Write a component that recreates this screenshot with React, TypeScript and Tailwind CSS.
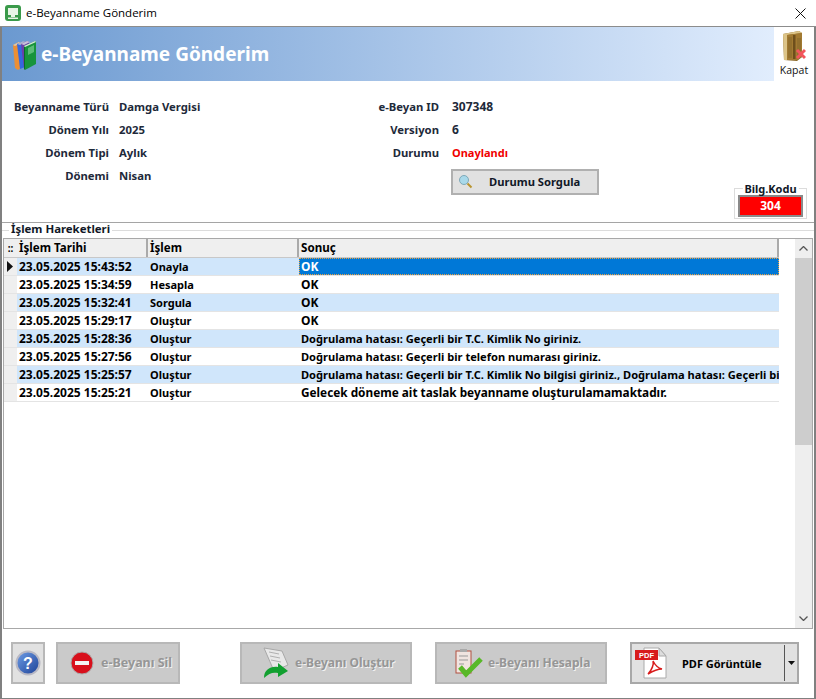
import React from "react";

const rows = [
  ["23.05.2025 15:43:52", "Onayla", "OK", "text-[12px]"],
  ["23.05.2025 15:34:59", "Hesapla", "OK", "text-[12px]"],
  ["23.05.2025 15:32:41", "Sorgula", "OK", "text-[12px]"],
  ["23.05.2025 15:29:17", "Oluştur", "OK", "text-[12px]"],
  ["23.05.2025 15:28:36", "Oluştur", "Doğrulama hatası: Geçerli bir T.C. Kimlik No giriniz.", "text-[11.1px]"],
  ["23.05.2025 15:27:56", "Oluştur", "Doğrulama hatası: Geçerli bir telefon numarası giriniz.", "text-[11.1px]"],
  ["23.05.2025 15:25:57", "Oluştur", "Doğrulama hatası: Geçerli bir T.C. Kimlik No bilgisi giriniz., Doğrulama hatası: Geçerli bir", "text-[11.1px]"],
  ["23.05.2025 15:25:21", "Oluştur", "Gelecek döneme ait taslak beyanname oluşturulamamaktadır.", "text-[11.8px]"],
];

function Books() {
  return (
    <svg width="25" height="33" viewBox="0 0 25 33" className="shrink-0">
      <path d="M1 7l6-3 2 1v25l-3 2-3-2z" fill="#ec8f35" />
      <path d="M1 7l6-3 2 1-6 3z" fill="#d8c7b0" />
      <path d="M5 6l6-3 2 1v25l-5 2z" fill="#3468de" />
      <path d="M5 6l6-3 3 1-6 3z" fill="#aab4cc" />
      <path d="M9 6l6-3 2 1v25l-5 2z" fill="#6a3fa8" />
      <path d="M9 6l6-3 3 1-6 3z" fill="#c8c0d8" />
      <path d="M12 8l11-5 1 1v22l-11 6z" fill="#17943c" />
      <path d="M12 8l11-5 1 1-11 5z" fill="#d8e8d8" />
      <path d="M16 10l6-3v7l-6 3z" fill="#5cbc78" />
      <path d="M13 9v23l-1-1V9z" fill="#0d6a2a" />
    </svg>
  );
}

function Door() {
  return (
    <svg width="24" height="31" viewBox="0 0 24 31">
      <path d="M1 3l16-3 3 2v24l-5 4-13-1z" fill="#8a6726" />
      <path d="M1 3l16-3 3 2-15 2v25H2z" fill="#dcc488" />
      <path d="M5 4l15-2v24l-5 3H5z" fill="#a27a32" />
      <path d="M11 4h2.5v24H11z" fill="#6e4f1c" />
      <path d="M6 6h4v21H6z" fill="#93702e" />
      <path d="M15 7h4v18h-4z" fill="#93702e" />
      <path d="M15 19l8 8M23 19l-8 8" stroke="#f2555c" strokeWidth="3" />
    </svg>
  );
}

function Info({ a, b }: { a: string; b: string }) {
  return (
    <div className="flex h-[23px] items-center gap-2.5 whitespace-nowrap">
      <div className="w-[107px] text-right text-[11.3px] text-[#1e2a3a]">{a}</div>
      <div className="text-[11.3px] text-[#1e2a3a]">{b}</div>
    </div>
  );
}

function Info2({ a, b, red }: { a: string; b: string; red?: boolean }) {
  return (
    <div className="flex h-[23px] items-center gap-[13px] whitespace-nowrap">
      <div className="w-[75px] text-right text-[11.3px] text-[#1e2a3a]">{a}</div>
      <div className={red ? "text-[11px] text-[#f00000]" : "text-[12px] text-[#1e2a3a]"}>{b}</div>
    </div>
  );
}

function Footer({ icon, label, w, pl, gap, size }: { icon: React.ReactNode; label: string; w: string; pl: string; gap: string; size?: string }) {
  return (
    <div className={`flex h-[42px] items-center border-2 border-[#b8b8b8] bg-[#cacaca] text-[#969696] whitespace-nowrap ${w} ${pl} ${gap}`}>
      {icon}
      <span className={`[text-shadow:1px_1px_0_#f2f2f2] ${size ?? ""}`}>{label}</span>
    </div>
  );
}

export default function App() {
  return (
    <div className="flex h-[699px] w-[816px] flex-col overflow-hidden bg-white font-['Noto_Sans'] text-[12px] font-bold leading-none">
      <div className="flex h-[27px] shrink-0 items-center border-b border-[#8c8c8c] pl-[5px]">
        <svg width="16" height="16" viewBox="0 0 16 16">
          <rect width="16" height="16" rx="3" fill="#3a9a4a" />
          <rect x="3" y="3" width="10" height="7" fill="#e8f4e6" />
          <rect x="6" y="10" width="4" height="2" fill="#e8f4e6" />
          <rect x="3" y="12.5" width="10" height="1.5" fill="#e8f4e6" />
        </svg>
        <span className="ml-[5px] font-['Open_Sans'] text-[11.5px] font-normal text-black">e-Beyanname Gönderim</span>
        <svg className="ml-auto mr-[10px]" width="11" height="11" viewBox="0 0 11 11">
          <path d="M.5.5l10 10M10.5.5l-10 10" stroke="#111" strokeWidth="1" />
        </svg>
      </div>

      <div className="flex flex-1 flex-col border-x-2 border-b border-[#808080]">
        <div className="flex h-[54px] shrink-0">
          <div className="flex w-[772px] items-center gap-[4px] bg-gradient-to-r from-[#6b99d0] to-[#e1edfd] pl-[10px]">
            <Books />
            <span className="text-[19px] text-white">e-Beyanname Gönderim</span>
          </div>
          <div className="flex flex-1 flex-col items-center pt-[4px]">
            <Door />
            <span className="mt-[3px] font-['Open_Sans'] text-[10.5px] font-normal text-[#111]">Kapat</span>
          </div>
        </div>

        <div className="relative flex h-[142px] shrink-0 border-b border-[#a5a5a5] pt-[14px]">
          <div className="w-[362px]">
            <Info a="Beyanname Türü" b="Damga Vergisi" />
            <Info a="Dönem Yılı" b="2025" />
            <Info a="Dönem Tipi" b="Aylık" />
            <Info a="Dönemi" b="Nisan" />
          </div>
          <div>
            <Info2 a="e-Beyan ID" b="307348" />
            <Info2 a="Versiyon" b="6" />
            <Info2 a="Durumu" b="Onaylandı" red />
            <div className="ml-[87px] mt-[5px] flex h-[26px] w-[148px] items-center border-2 border-[#b0b0b0] bg-[#e1e1e1] pl-[5px] text-[11.2px] text-[#111827]">
              <svg width="16" height="16" viewBox="0 0 16 16">
                <circle cx="6" cy="6" r="4.5" fill="#a9d9ea" stroke="#7fa9b8" />
                <path d="M9.5 9.5l4 4" stroke="#b8942e" strokeWidth="2" />
              </svg>
              <span className="ml-[15px]">Durumu Sorgula</span>
            </div>
          </div>
          <div className="absolute bottom-[3px] right-[7px] h-[31px] w-[73px] border border-[#dcdcdc] px-[3px] pt-[6px]">
            <span className="absolute left-1/2 top-[-6px] -translate-x-1/2 whitespace-nowrap bg-white px-0.5 text-[11px] text-[#111827]">Bilg.Kodu</span>
            <div className="flex h-[22px] items-center justify-center border-2 border-[#8a8a8a] bg-[#ff0000] text-white">304</div>
          </div>
        </div>

        <div className="relative flex flex-1 flex-col pt-[15px]">
          <div className="absolute left-0 right-0 top-[7px] border-t border-[#dcdcdc]" />
          <span className="absolute left-[7px] top-[0px] bg-white px-[2px] text-[11.4px] text-[#111827]">İşlem Hareketleri</span>
          <div className="relative mx-px flex flex-1 border border-[#a8a8a8]">
            <div className="flex-1 overflow-hidden">
              <div className="flex h-[19px] w-[775px] border-b border-[#c8c8c8] bg-[#efefef] text-[11.6px] text-black">
                <div className="flex w-[13px] items-center justify-center text-[10px]">::</div>
                <div className="flex w-[131px] items-center border-r-2 border-[#aaa] pl-0.5">İşlem Tarihi</div>
                <div className="flex w-[151px] items-center border-r-2 border-[#aaa] pl-0.5">İşlem</div>
                <div className="flex flex-1 items-center border-r-2 border-[#aaa] pl-0.5">Sonuç</div>
              </div>
              {rows.map((r, i) => (
                <div key={i} className={`flex h-[18px] w-[775px] border-b border-[#e4e4e4] text-black ${i % 2 === 0 ? "bg-[#d0e6fb]" : "bg-white"}`}>
                  <div className="flex w-[13px] items-center justify-center bg-[#efefef]">
                    {i === 0 && (
                      <svg width="7" height="11" viewBox="0 0 7 11">
                        <path d="M0 0l6 5.5L0 11z" fill="#111" />
                      </svg>
                    )}
                  </div>
                  <div className="flex w-[131px] items-center whitespace-nowrap pl-0.5">{r[0]}</div>
                  <div className="flex w-[151px] items-center pl-0.5 text-[11px]">{r[1]}</div>
                  <div className={`flex flex-1 items-center overflow-hidden whitespace-nowrap pl-0.5 ${r[3]} ${i === 0 ? "bg-[#0078d7] text-white outline-1 -outline-offset-1 outline-dotted outline-[#e8a040]" : ""}`}>{r[2]}</div>
                </div>
              ))}
            </div>
            <div className="flex w-[17px] flex-col items-center bg-[#eeeeee]">
              <svg className="my-[7px]" width="9" height="5" viewBox="0 0 9 5">
                <path d="M.5 4.5l4-4 4 4" fill="none" stroke="#555" strokeWidth="1.3" />
              </svg>
              <div className="h-[187px] w-full bg-[#cdcdcd]" />
              <svg className="mb-[7px] mt-auto" width="9" height="5" viewBox="0 0 9 5">
                <path d="M.5.5l4 4 4-4" fill="none" stroke="#555" strokeWidth="1.3" />
              </svg>
            </div>
          </div>
        </div>

        <div className="flex h-[69px] shrink-0 items-center pb-[1px] pl-[9px]">
          <div className="flex h-[42px] w-[34px] items-center justify-center border-2 border-[#b8b8b8] bg-[#e1e1e1]">
            <svg width="26" height="26" viewBox="0 0 26 26">
              <defs>
                <linearGradient id="q" x1="0" y1="0" x2="1" y2="1">
                  <stop offset="0" stopColor="#6f9fe8" />
                  <stop offset="1" stopColor="#1c3f94" />
                </linearGradient>
              </defs>
              <circle cx="13" cy="13" r="11.5" fill="url(#q)" stroke="#b8b8c4" strokeWidth="2" />
              <text x="13" y="19" textAnchor="middle" fontSize="16" fontWeight="700" fill="#fff" fontFamily="Liberation Sans">?</text>
            </svg>
          </div>
          <div className="ml-[11px]">
            <Footer w="w-[124px]" pl="pl-[12px]" gap="gap-[7px]" size="text-[12.5px]" label="e-Beyanı Sil" icon={
              <svg width="24" height="24" viewBox="0 0 24 24">
                <circle cx="12" cy="12" r="11" fill="#d8101c" stroke="#aaa" />
                <rect x="5" y="10" width="14" height="4" fill="#f4f4f4" />
              </svg>
            } />
          </div>
          <div className="ml-[60px]">
            <Footer w="w-[172px]" pl="pl-[20px]" gap="gap-[5px]" label="e-Beyanı Oluştur" icon={
              <svg width="28" height="32" viewBox="0 0 28 32">
                <path d="M2 1l18 3 6 14-14 6z" fill="#e8e8e8" stroke="#a8a8a8" />
                <path d="M7 5l10 2M8 9l10 2M9 13l10 2" stroke="#b0b0b0" />
                <path d="M2 31c0-8 6-12 14-11v-4l10 8-10 6v-4c-5-1-9 0-14 5z" fill="#12a030" />
              </svg>
            } />
          </div>
          <div className="ml-[23px]">
            <Footer w="w-[172px]" pl="pl-[17px]" gap="gap-[4px]" label="e-Beyanı Hesapla" icon={
              <svg width="30" height="30" viewBox="0 0 30 30">
                <rect x="2" y="3" width="15" height="22" fill="#f0e4e0" stroke="#b05040" />
                <rect x="6" y="1" width="7" height="3" fill="#aaa" />
                <path d="M5 8h9M5 12h9M5 16h5" stroke="#999" />
                <path d="M6 19l6 7L27 11" fill="none" stroke="#58b828" strokeWidth="5" />
              </svg>
            } />
          </div>
          <div className="ml-[23px] flex h-[42px] w-[169px] items-center border-2 border-[#a8a8a8] bg-[#e1e1e1] text-black">
            <svg className="ml-[2px] shrink-0" width="34" height="32" viewBox="0 0 34 32">
              <path d="M10 1h15l7 8v22H10z" fill="#fff" stroke="#aaa" />
              <path d="M25 1v8h7z" fill="#ddd" stroke="#aaa" />
              <rect x="1" y="3" width="23" height="10" fill="#d81c1c" />
              <text x="12.5" y="11" textAnchor="middle" fontSize="7.5" fontWeight="700" fill="#fff" fontFamily="Liberation Sans">PDF</text>
              <path d="M14 27c4-4 6-10 5-13 2 4 5 7 9 8-5 0-9 2-14 5z" fill="none" stroke="#d81c1c" strokeWidth="1.5" />
            </svg>
            <span className="ml-[14px] whitespace-nowrap text-[11px]">PDF Görüntüle</span>
            <div className="ml-auto flex h-[36px] w-[13px] items-center justify-center border-l border-[#555]">
              <svg width="7" height="4" viewBox="0 0 7 4"><path d="M0 0h7L3.5 4z" fill="#111" /></svg>
            </div>
          </div>
        </div>
      </div>
    </div>
  );
}
